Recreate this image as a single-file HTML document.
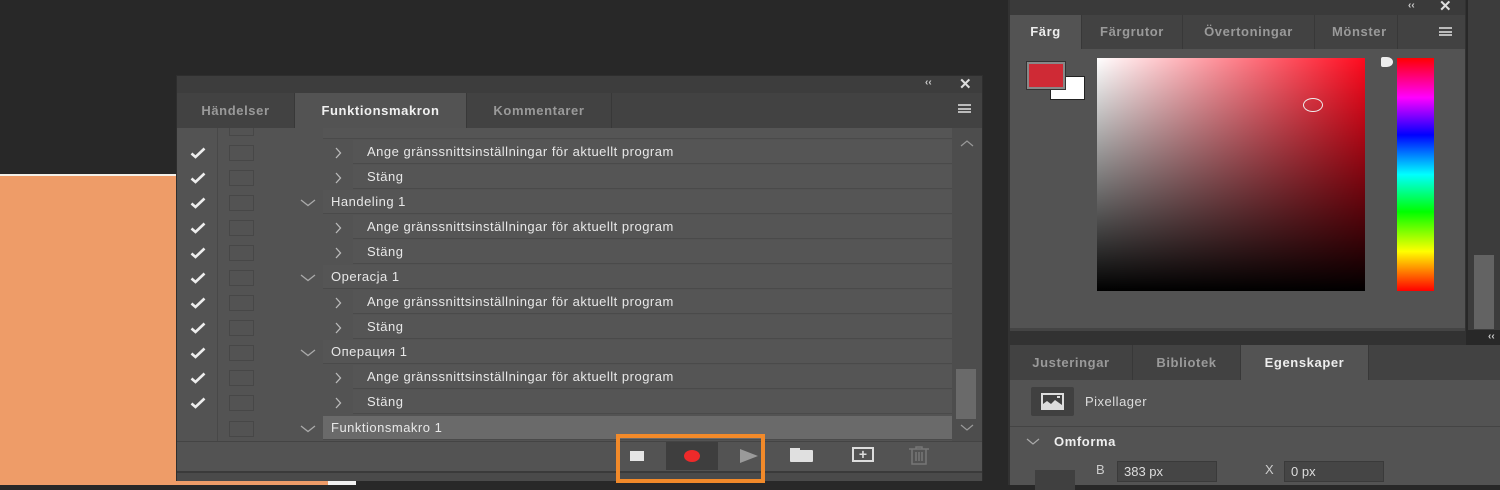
<!DOCTYPE html>
<html><head><meta charset="utf-8"><style>
*{margin:0;padding:0;box-sizing:border-box}
body{width:1500px;height:485px;background:#282828;position:relative;overflow:hidden;font-family:"Liberation Sans",sans-serif;font-size:13px;color:#ddd}
.a{position:absolute}
.row{position:absolute;left:0;height:25px;width:776px}
.chk{position:absolute;left:13px;top:7px}
.box{position:absolute;left:52px;top:5px;width:25px;height:16px;border:1px solid #474747}
.lbl{position:absolute;top:0;height:24px;line-height:24px;background:#555;border-bottom:1px solid #4a4a4a;color:#e8e8e8;letter-spacing:.5px}
.arr{position:absolute;top:7px}
.tab{position:absolute;top:0;height:35px;line-height:35px;font-weight:bold;color:#9a9a9a;text-align:center;background:#424242;border-right:1px solid #383838;letter-spacing:.6px}
</style></head><body>
<svg width="0" height="0" style="position:absolute"><defs>
<symbol id="ck" viewBox="0 0 16 12"><path d="M1.5 6.5 L5.5 10 L14.5 1.5" fill="none" stroke="#eee" stroke-width="2.6"/></symbol>
<symbol id="rt" viewBox="0 0 8 12"><path d="M2 1 L6.5 6 L2 11" fill="none" stroke="#bbb" stroke-width="1.3"/></symbol>
<symbol id="dn" viewBox="0 0 16 8"><path d="M1 1 L8 6.5 L15 1" fill="none" stroke="#aaa" stroke-width="1.3"/></symbol>
</defs></svg>
<!-- orange canvas -->
<div class="a" style="left:0;top:174px;width:330px;height:311px;background:#ee9c68;border-top:2px solid #f4f0ea"></div>
<div class="a" style="left:328px;top:476px;width:28px;height:9px;background:#f2f2f2"></div>

<!-- Actions panel -->
<div class="a" style="left:176px;top:75px;width:807px;height:406px;background:#535353;border:1px solid #2e2e2e">
 <div class="a" style="left:0;top:0;width:805px;height:17px;background:#3d3d3d"></div>
 <div class="a" style="left:748px;top:1px;font-size:10px;color:#ccc;font-weight:bold">‹‹</div>
 <div class="a" style="left:782px;top:-1px;font-size:15px;color:#ddd;font-weight:bold">✕</div>
 <div class="a" style="left:0;top:17px;width:805px;height:35px;background:#424242">
  <div class="tab" style="left:0;width:118px">Händelser</div>
  <div class="tab" style="left:118px;width:172px;background:#535353;color:#f0f0f0">Funktionsmakron</div>
  <div class="tab" style="left:290px;width:145px">Kommentarer</div>
  <div class="a" style="left:781px;top:11px;width:13px;height:9px;border-top:2px solid #bbb;border-bottom:2px solid #bbb"><div style="margin-top:1.5px;height:2px;background:#bbb"></div></div>
 </div>
 <div class="a" style="left:40px;top:52px;width:1px;height:313px;background:#484848"></div>
 <div class="a" style="left:0;top:52px;width:775px;height:313px;overflow:hidden">
  <div class="row" style="top:-13px"><div class="box"></div><div class="lbl" style="left:146px;width:630px"></div></div>
  <div class="row" style="top:12px"><svg class="chk" width="16" height="12"><use href="#ck"/></svg><div class="box"></div><svg class="arr" style="left:157px" width="8" height="12"><use href="#rt"/></svg><div class="lbl" style="left:176px;width:600px;padding-left:14px">Ange gränssnittsinställningar för aktuellt program</div></div>
  <div class="row" style="top:37px"><svg class="chk" width="16" height="12"><use href="#ck"/></svg><div class="box"></div><svg class="arr" style="left:157px" width="8" height="12"><use href="#rt"/></svg><div class="lbl" style="left:176px;width:600px;padding-left:14px">Stäng</div></div>
  <div class="row" style="top:62px"><svg class="chk" width="16" height="12"><use href="#ck"/></svg><div class="box"></div><svg class="arr" style="left:123px;top:9px" width="16" height="8"><use href="#dn"/></svg><div class="lbl" style="left:146px;width:630px;padding-left:8px">Handeling 1</div></div>
  <div class="row" style="top:87px"><svg class="chk" width="16" height="12"><use href="#ck"/></svg><div class="box"></div><svg class="arr" style="left:157px" width="8" height="12"><use href="#rt"/></svg><div class="lbl" style="left:176px;width:600px;padding-left:14px">Ange gränssnittsinställningar för aktuellt program</div></div>
  <div class="row" style="top:112px"><svg class="chk" width="16" height="12"><use href="#ck"/></svg><div class="box"></div><svg class="arr" style="left:157px" width="8" height="12"><use href="#rt"/></svg><div class="lbl" style="left:176px;width:600px;padding-left:14px">Stäng</div></div>
  <div class="row" style="top:137px"><svg class="chk" width="16" height="12"><use href="#ck"/></svg><div class="box"></div><svg class="arr" style="left:123px;top:9px" width="16" height="8"><use href="#dn"/></svg><div class="lbl" style="left:146px;width:630px;padding-left:8px">Operacja 1</div></div>
  <div class="row" style="top:162px"><svg class="chk" width="16" height="12"><use href="#ck"/></svg><div class="box"></div><svg class="arr" style="left:157px" width="8" height="12"><use href="#rt"/></svg><div class="lbl" style="left:176px;width:600px;padding-left:14px">Ange gränssnittsinställningar för aktuellt program</div></div>
  <div class="row" style="top:187px"><svg class="chk" width="16" height="12"><use href="#ck"/></svg><div class="box"></div><svg class="arr" style="left:157px" width="8" height="12"><use href="#rt"/></svg><div class="lbl" style="left:176px;width:600px;padding-left:14px">Stäng</div></div>
  <div class="row" style="top:212px"><svg class="chk" width="16" height="12"><use href="#ck"/></svg><div class="box"></div><svg class="arr" style="left:123px;top:9px" width="16" height="8"><use href="#dn"/></svg><div class="lbl" style="left:146px;width:630px;padding-left:8px">Операция 1</div></div>
  <div class="row" style="top:237px"><svg class="chk" width="16" height="12"><use href="#ck"/></svg><div class="box"></div><svg class="arr" style="left:157px" width="8" height="12"><use href="#rt"/></svg><div class="lbl" style="left:176px;width:600px;padding-left:14px">Ange gränssnittsinställningar för aktuellt program</div></div>
  <div class="row" style="top:262px"><svg class="chk" width="16" height="12"><use href="#ck"/></svg><div class="box"></div><svg class="arr" style="left:157px" width="8" height="12"><use href="#rt"/></svg><div class="lbl" style="left:176px;width:600px;padding-left:14px">Stäng</div></div>
  <div class="row" style="top:288px"><div class="box"></div><svg class="arr" style="left:123px;top:9px" width="16" height="8"><use href="#dn"/></svg><div class="lbl" style="left:146px;width:630px;padding-left:8px;background:#6a6a6a">Funktionsmakro 1</div></div>
 </div>
 <!-- scrollbar -->
 <div class="a" style="left:775px;top:52px;width:30px;height:313px;background:#4d4d4d">
  <svg class="a" style="left:8px;top:12px" width="14" height="7"><path d="M1 6 L7 1 L13 6" fill="none" stroke="#999" stroke-width="1.2"/></svg>
  <div class="a" style="left:4px;top:241px;width:20px;height:50px;background:#6a6a6a"></div>
  <svg class="a" style="left:8px;top:296px" width="14" height="7"><path d="M1 1 L7 6 L13 1" fill="none" stroke="#999" stroke-width="1.2"/></svg>
 </div>
 <!-- bottom bar -->
 <div class="a" style="left:0;top:365px;width:805px;height:30px;background:#535353;border-top:1px solid #444"></div>
 <div class="a" style="left:0;top:395px;width:805px;height:10px;background:#4a4a4a;border-top:2px solid #3a3a3a"></div>
 <div class="a" style="left:453px;top:375px;width:14px;height:10px;background:#e5e5e5"></div>
 <div class="a" style="left:489px;top:366px;width:52px;height:28px;background:#3e3e3e"></div>
 <div class="a" style="left:507px;top:374px;width:16px;height:12px;border-radius:50%;background:#ee2a2a"></div>
 <div class="a" style="left:563px;top:373px;width:0;height:0;border-left:18px solid #9a9a9a;border-top:7px solid transparent;border-bottom:7px solid transparent"></div>
 <div class="a" style="left:613px;top:374px;width:23px;height:12px;background:#e0e0e0;border-radius:1px"></div>
 <div class="a" style="left:613px;top:372px;width:10px;height:3px;background:#e0e0e0"></div>
 <div class="a" style="left:675px;top:371px;width:22px;height:15px;border:2px solid #ddd;color:#ddd;font-size:14px;line-height:11px;text-align:center;font-weight:bold">+</div>
 <svg class="a" style="left:731px;top:370px" width="22" height="19"><path d="M1 3 H21 M8 3 V1 H14 V3 M4 3 V18 H18 V3 M8 6 V15 M11 6 V15 M14 6 V15" fill="none" stroke="#777" stroke-width="1.5"/></svg>
</div>
<!-- orange highlight -->
<div class="a" style="left:616px;top:434px;width:149px;height:49px;border:4px solid #f28a2a"></div>

<!-- Right: color panel -->
<div class="a" style="left:1008px;top:0;width:458px;height:485px;background:#323232"></div>
<div class="a" style="left:1010px;top:0;width:455px;height:15px;background:#3a3a3a"></div>
<div class="a" style="left:1408px;top:0;font-size:10px;color:#ccc;font-weight:bold">‹‹</div>
<div class="a" style="left:1439px;top:-3px;font-size:15px;color:#ddd;font-weight:bold">✕</div>
<div class="a" style="left:1010px;top:15px;width:455px;height:315px;background:#535353">
 <div class="a" style="left:0;top:0;width:455px;height:34px;background:#424242">
  <div class="tab" style="left:0;width:72px;height:34px;line-height:34px;background:#535353;color:#eee">Färg</div>
  <div class="tab" style="left:72px;width:101px;height:34px;line-height:34px">Färgrutor</div>
  <div class="tab" style="left:173px;width:132px;height:34px;line-height:34px">Övertoningar</div>
  <div class="tab" style="left:305px;width:83px;height:34px;line-height:34px;text-align:left;padding-left:17px;overflow:hidden;white-space:nowrap">Mönster</div>
  <div class="a" style="left:429px;top:12px;width:13px;height:9px;border-top:2px solid #bbb;border-bottom:2px solid #bbb"><div style="margin-top:1.5px;height:2px;background:#bbb"></div></div>
 </div>
 <div class="a" style="left:40px;top:61px;width:35px;height:24px;background:#fff;border:1px solid #222"></div>
 <div class="a" style="left:17px;top:47px;width:38px;height:27px;background:#cf2a35;border:2px solid #888;outline:1px solid #333"></div>
 <div class="a" style="left:87px;top:43px;width:268px;height:233px;background:linear-gradient(to bottom,rgba(0,0,0,0),#000),linear-gradient(to right,#fff,#ff0a1e)"></div>
 <div class="a" style="left:293px;top:83px;width:20px;height:14px;border:1px solid #eee;border-radius:50%"></div>
 <div class="a" style="left:387px;top:43px;width:37px;height:233px;background:linear-gradient(to bottom,#f00,#f0f 17%,#00f 33%,#0ff 50%,#0f0 66%,#ff0 83%,#f00)"></div>
 <div class="a" style="left:371px;top:42px;width:12px;height:10px;background:#eee;border-radius:2px 50% 50% 2px"></div>
 <div class="a" style="left:0;top:313px;width:455px;height:3px;background:#444"></div>
</div>
<!-- right scrollbar -->
<div class="a" style="left:1468px;top:0;width:32px;height:330px;background:#3c3c3c">
 <div class="a" style="left:6px;top:255px;width:20px;height:74px;background:#636363"></div>
</div>
<div class="a" style="left:1488px;top:331px;font-size:10px;color:#ccc;font-weight:bold">‹‹</div>

<!-- Properties -->
<div class="a" style="left:1010px;top:345px;width:490px;height:140px;background:#535353">
 <div class="a" style="left:0;top:0;width:490px;height:35px;background:#424242">
  <div class="tab" style="left:0;width:123px">Justeringar</div>
  <div class="tab" style="left:123px;width:108px">Bibliotek</div>
  <div class="tab" style="left:231px;width:128px;background:#535353;color:#eee">Egenskaper</div>
 </div>
 <div class="a" style="left:21px;top:42px;width:43px;height:29px;background:#404040;border-radius:2px"></div>
 <svg class="a" style="left:31px;top:48px" width="23" height="17"><rect x="1" y="1" width="21" height="15" fill="none" stroke="#ddd" stroke-width="2"/><path d="M2 15 L2 11 L6 8 L10 11 L14 7 L21 12 L21 15 Z" fill="#ddd"/><rect x="16" y="3" width="3" height="2" fill="#ddd"/></svg>
 <div class="a" style="left:75px;top:49px;color:#ddd;font-size:13px;letter-spacing:.5px">Pixellager</div>
 <div class="a" style="left:0;top:81px;width:490px;height:1px;background:#444"></div>
 <svg class="a" style="left:16px;top:93px" width="14" height="7"><path d="M1 1 L7 6 L13 1" fill="none" stroke="#aaa" stroke-width="1.2"/></svg>
 <div class="a" style="left:44px;top:89px;color:#eee;font-size:13px;font-weight:bold;letter-spacing:.6px">Omforma</div>
 <div class="a" style="left:86px;top:117px;color:#ccc">B</div>
 <div class="a" style="left:107px;top:116px;width:100px;height:21px;background:#454545;border:1px solid #3a3a3a;color:#ddd;padding-left:6px;line-height:19px">383 px</div>
 <div class="a" style="left:255px;top:117px;color:#ccc">X</div>
 <div class="a" style="left:274px;top:116px;width:100px;height:21px;background:#454545;border:1px solid #3a3a3a;color:#ddd;padding-left:6px;line-height:19px">0 px</div>
 <div class="a" style="left:25px;top:125px;width:40px;height:20px;background:#404040"></div>
</div>
</body></html>
